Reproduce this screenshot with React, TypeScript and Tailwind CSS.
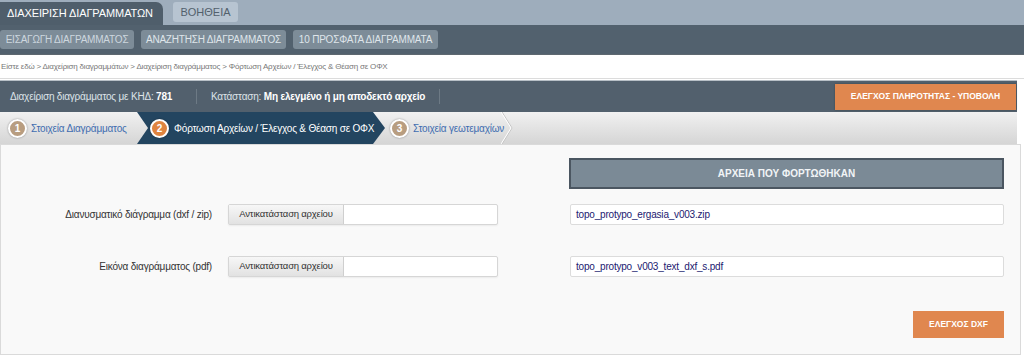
import React from "react";

const font = "font-['Liberation_Sans',Arial,sans-serif]";

function StepCircle({ n, active }: { n: number; active?: boolean }) {
  return (
    <span
      className={`flex h-[19px] w-[19px] shrink-0 items-center justify-center rounded-full border-2 border-white text-[10px] font-bold tracking-normal text-white shadow-[0_0_2px_rgba(0,0,0,0.4)] ${
        active ? "bg-[#e0843f]" : "bg-[#b89d80]"
      }`}
    >
      {n}
    </span>
  );
}

function Steps() {
  return (
    <div className="flex h-[32px] w-[1017px] whitespace-nowrap bg-gradient-to-b from-[#f1f1f1] to-[#d5d5d5] text-[10px] tracking-[-0.2px]">
      <div className="flex w-[137px] items-center gap-[4px] pl-[8px]">
        <StepCircle n={1} />
        <span className="text-[#3f6db0]">Στοιχεία Διαγράμματος</span>
      </div>
      <div className="flex w-[248px] items-center gap-[5px] bg-[#234560] pl-[13px] [clip-path:polygon(0_0,calc(100%-12px)_0,100%_50%,calc(100%-12px)_100%,0_100%,11px_50%)]">
        <StepCircle n={2} active />
        <span className="text-white">Φόρτωση Αρχείων / Έλεγχος &amp; Θέαση σε ΟΦΧ</span>
      </div>
      <div className="relative flex w-[128px] items-center gap-[4px] pl-[5px]">
        <StepCircle n={3} />
        <span className="text-[#3f6db0]">Στοιχεία γεωτεμαχίων</span>
        <svg className="absolute right-0 top-0" width="12" height="32" viewBox="0 0 12 32">
          <polyline points="1,0 11,16 1,32" fill="none" stroke="#c4c4c4" strokeWidth="1" />
          <polyline points="0,0 10,16 0,32" fill="none" stroke="#ffffff" strokeWidth="1" />
        </svg>
      </div>
    </div>
  );
}

function FileRow({ label, file }: { label: string; file: string }) {
  return (
    <div className="flex h-[21px] items-center whitespace-nowrap tracking-[-0.2px]">
      <div className="w-[211px] text-right text-[10px] text-[#333]">{label}</div>
      <div className="ml-[16px] flex h-[21px] w-[270px] rounded-[2px] border border-[#d6d6d6] bg-white shadow-[0_1px_2px_rgba(0,0,0,0.06)]">
        <button className="h-full w-[115px] border-r border-[#cfcfcf] bg-gradient-to-b from-[#f7f7f7] to-[#e2e2e2] text-[9.5px] text-[#333]">
          Αντικατάσταση αρχείου
        </button>
        <div className="flex-1" />
      </div>
      <div className="ml-[72px] flex h-[21px] w-[434px] items-center rounded-[2px] border border-[#dcdcdc] bg-white pl-[5px] text-[10px] text-[#1c2070]">
        {file}
      </div>
    </div>
  );
}

export default function App() {
  return (
    <div className={`h-[360px] w-[1024px] overflow-hidden whitespace-nowrap bg-white ${font}`}>
      {/* top tabs */}
      <div className="flex h-[25px] items-end bg-[#9eadbc]">
        <div className="flex h-[23px] w-[163px] items-center rounded-tr-[7px] bg-[#4f5e6b] pl-[7px] text-[11px] tracking-[-0.1px] text-white">
          ΔΙΑΧΕΙΡΙΣΗ ΔΙΑΓΡΑΜΜΑΤΩΝ
        </div>
        <div className="mb-[3px] ml-[10px] flex h-[20px] w-[65px] items-center justify-center rounded-[3px] bg-[#b7c4d1] text-[11px] text-[#52606c]">
          ΒΟΗΘΕΙΑ
        </div>
      </div>
      {/* sub nav */}
      <div className="flex h-[30px] items-center gap-[7px] border-b border-[#5e6870] bg-[#52616e] text-[10px] tracking-[-0.2px]">
        <button className="flex h-[19px] w-[134px] items-center justify-center rounded-[3px] bg-[#7d8c98] text-[#cdd7df]">
          ΕΙΣΑΓΩΓΗ ΔΙΑΓΡΑΜΜΑΤΟΣ
        </button>
        <button className="flex h-[19px] w-[145px] items-center justify-center rounded-[3px] bg-[#7d8c98] text-[#dfe5ea]">
          ΑΝΑΖΗΤΗΣΗ ΔΙΑΓΡΑΜΜΑΤΟΣ
        </button>
        <button className="flex h-[19px] w-[145px] items-center justify-center rounded-[3px] bg-[#7d8c98] text-[#dfe5ea]">
          10 ΠΡΟΣΦΑΤΑ ΔΙΑΓΡΑΜΜΑΤΑ
        </button>
      </div>
      {/* breadcrumb */}
      <div className="flex h-[24px] items-center border-b border-[#dcdcdc] pl-[1px] text-[8px] tracking-[-0.2px] text-[#777]">
        Είστε εδώ &gt; Διαχείριση διαγραμμάτων &gt; Διαχείριση διαγράμματος &gt; Φόρτωση Αρχείων / Έλεγχος &amp; Θέαση σε ΟΦΧ
      </div>
      {/* info bar */}
      <div className="mt-[1px] flex h-[32px] w-[1017px] items-center border-t border-[#b8c0c7] bg-[#52606d] text-[10px] tracking-[-0.2px] text-[#dde3e8]">
        <div className="w-[197px] border-r border-[#6d7a85] pl-[10px]">
          Διαχείριση διαγράμματος με ΚΗΔ: <b className="text-white">781</b>
        </div>
        <div className="w-[243px] border-r border-[#6d7a85] pl-[14px]">
          Κατάσταση: <b className="text-white">Μη ελεγμένο ή μη αποδεκτό αρχείο</b>
        </div>
        <div className="flex-1" />
        <button className="mr-[1px] h-[26px] w-[181px] bg-[#e0874f] text-[8.5px] font-bold tracking-normal text-white shadow-[0_0_2px_rgba(0,0,0,0.3)]">
          ΕΛΕΓΧΟΣ ΠΛΗΡΟΤΗΤΑΣ - ΥΠΟΒΟΛΗ
        </button>
      </div>
      <Steps />
      {/* content */}
      <div className="flex h-[211px] w-[1021px] flex-col border border-[#dadada] bg-[#f9f9f9]">
        <div className="ml-[568px] mt-[13px] flex h-[31px] w-[435px] items-center justify-center border-2 border-[#4b5661] bg-[#7b8a96] text-[10px] font-bold text-[#f1f4f6]">
          ΑΡΧΕΙΑ ΠΟΥ ΦΟΡΤΩΘΗΚΑΝ
        </div>
        <div className="mt-[15px]">
          <FileRow label="Διανυσματικό διάγραμμα (dxf / zip)" file="topo_protypo_ergasia_v003.zip" />
        </div>
        <div className="mt-[31px]">
          <FileRow label="Εικόνα διαγράμματος (pdf)" file="topo_protypo_v003_text_dxf_s.pdf" />
        </div>
        <div className="mt-[34px] flex justify-end pr-[16px]">
          <button className="h-[27px] w-[91px] bg-[#e0874f] text-[8.5px] font-bold text-white">
            ΕΛΕΓΧΟΣ DXF
          </button>
        </div>
      </div>
    </div>
  );
}
